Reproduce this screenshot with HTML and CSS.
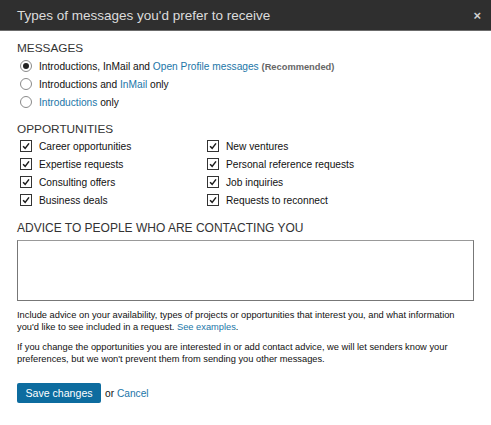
FILE: index.html
```html
<!DOCTYPE html>
<html>
<head>
<meta charset="utf-8">
<link rel="stylesheet" href="styles.css">
</head>
<body>
<div class="dialog">
  <div class="header">
    <span class="title">Types of messages you'd prefer to receive</span>
    <span class="close">×</span>
  </div>
  <div class="content">
    <div class="label l-messages">MESSAGES</div>
    <div class="radios">
      <div class="row"><span class="radio checked"></span><span>Introductions, InMail and <a class="link">Open Profile messages</a> <span class="rec">(Recommended)</span></span></div>
      <div class="row"><span class="radio"></span><span>Introductions and <a class="link">InMail</a> only</span></div>
      <div class="row"><span class="radio"></span><span><a class="link">Introductions</a> only</span></div>
    </div>
    <div class="label l-opps">OPPORTUNITIES</div>
    <div class="checks">
      <div class="row"><span class="check"><svg viewBox="0 0 12 12" width="12" height="12"><path d="M2.5 6.2 L5 8.8 L9.6 2.8" fill="none" stroke="#1a1a1a" stroke-width="1.8"/></svg></span><span>Career opportunities</span></div>
      <div class="row"><span class="check"><svg viewBox="0 0 12 12" width="12" height="12"><path d="M2.5 6.2 L5 8.8 L9.6 2.8" fill="none" stroke="#1a1a1a" stroke-width="1.8"/></svg></span><span>New ventures</span></div>
      <div class="row"><span class="check"><svg viewBox="0 0 12 12" width="12" height="12"><path d="M2.5 6.2 L5 8.8 L9.6 2.8" fill="none" stroke="#1a1a1a" stroke-width="1.8"/></svg></span><span>Expertise requests</span></div>
      <div class="row"><span class="check"><svg viewBox="0 0 12 12" width="12" height="12"><path d="M2.5 6.2 L5 8.8 L9.6 2.8" fill="none" stroke="#1a1a1a" stroke-width="1.8"/></svg></span><span>Personal reference requests</span></div>
      <div class="row"><span class="check"><svg viewBox="0 0 12 12" width="12" height="12"><path d="M2.5 6.2 L5 8.8 L9.6 2.8" fill="none" stroke="#1a1a1a" stroke-width="1.8"/></svg></span><span>Consulting offers</span></div>
      <div class="row"><span class="check"><svg viewBox="0 0 12 12" width="12" height="12"><path d="M2.5 6.2 L5 8.8 L9.6 2.8" fill="none" stroke="#1a1a1a" stroke-width="1.8"/></svg></span><span>Job inquiries</span></div>
      <div class="row"><span class="check"><svg viewBox="0 0 12 12" width="12" height="12"><path d="M2.5 6.2 L5 8.8 L9.6 2.8" fill="none" stroke="#1a1a1a" stroke-width="1.8"/></svg></span><span>Business deals</span></div>
      <div class="row"><span class="check"><svg viewBox="0 0 12 12" width="12" height="12"><path d="M2.5 6.2 L5 8.8 L9.6 2.8" fill="none" stroke="#1a1a1a" stroke-width="1.8"/></svg></span><span>Requests to reconnect</span></div>
    </div>
    <div class="label l-advice">ADVICE TO PEOPLE WHO ARE CONTACTING YOU</div>
    <div class="textarea"></div>
    <p class="note n1">Include advice on your availability, types of projects or opportunities that interest you, and what information<br>you'd like to see included in a request. <a class="link">See examples</a>.</p>
    <p class="note n2">If you change the opportunities you are interested in or add contact advice, we will let senders know your<br>preferences, but we won't prevent them from sending you other messages.</p>
    <div class="actions">
      <span class="btn">Save changes</span>
      <span class="or">or <a class="link">Cancel</a></span>
    </div>
  </div>
</div>
</body>
</html>
```

FILE: styles.css
```css
html, body {
  margin: 0;
  padding: 0;
  background: #ffffff;
}
body {
  font-family: "Liberation Sans", Arial, sans-serif;
  color: #111;
}
.dialog {
  width: 491px;
  height: 425px;
  background: #fff;
}
.header {
  height: 30px;
  background: #2f2f2f;
  border-bottom: 1px solid #6b6b6b;
  display: flex;
  align-items: center;
  justify-content: space-between;
  padding: 0 10px 0 17px;
}
.title {
  color: #dcdcdc;
  font-size: 13.5px;
}
.close {
  color: #cfcfcf;
  font-size: 13px;
  font-weight: bold;
}
.content {
  padding: 0 18px 0 17px;
}
.label {
  font-size: 11.8px;
  color: #333;
  height: 14px;
  line-height: 14px;
}
.l-messages { margin-top: 10px; }
.l-opps { margin-top: 11px; }
.l-advice { margin-top: 12px; font-size: 12px; }
.radios {
  margin-top: 2px;
  padding-left: 3px;
}
.row {
  height: 18px;
  display: flex;
  align-items: center;
  gap: 7px;
  font-size: 10.2px;
  color: #111;
  white-space: nowrap;
}
.radio {
  width: 10px;
  height: 10px;
  border: 1px solid #8a8a8a;
  border-radius: 50%;
  display: flex;
  align-items: center;
  justify-content: center;
  flex: none;
  background: #fff;
}
.radio.checked::after {
  content: "";
  width: 6px;
  height: 6px;
  border-radius: 50%;
  background: #222;
}
.link {
  color: #2276a8;
  text-decoration: none;
}
.rec {
  color: #666;
  font-size: 9.3px;
  font-weight: bold;
}
.checks {
  margin-top: 1px;
  padding-left: 3px;
  display: grid;
  grid-template-columns: 187px auto;
}
.check {
  width: 10px;
  height: 10px;
  border: 1px solid #333;
  flex: none;
  display: flex;
  align-items: center;
  justify-content: center;
  background: #fff;
}
.check svg {
  width: 10px;
  height: 10px;
}
.textarea {
  margin-top: 5px;
  width: 455px;
  height: 59px;
  border: 1px solid #777;
  border-top-color: #999;
}
.note {
  margin: 9px 0 0 0;
  font-size: 9.3px;
  line-height: 11.5px;
  color: #111;
  white-space: nowrap;
}
.note.n2 { margin-top: 9px; }
.actions {
  margin-top: 18px;
  display: flex;
  align-items: center;
  gap: 4px;
}
.btn {
  width: 84px;
  height: 20px;
  background: #0d6c9f;
  border-radius: 2px;
  color: #fff;
  font-size: 10.6px;
  display: flex;
  align-items: center;
  justify-content: center;
}
.or {
  font-size: 10.2px;
  color: #111;
}
```
